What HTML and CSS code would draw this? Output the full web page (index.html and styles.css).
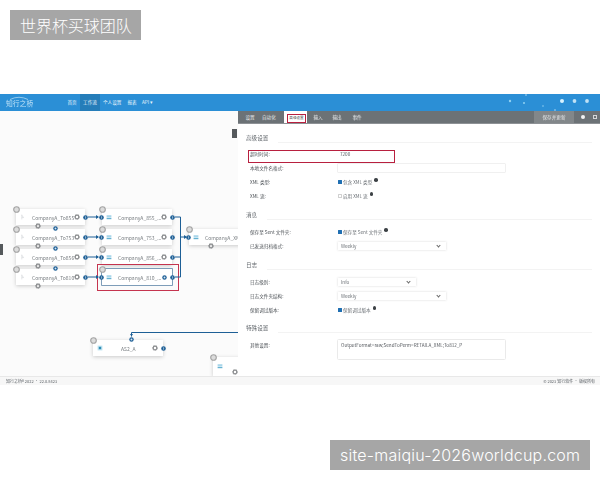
FILE: index.html
```html
<!DOCTYPE html>
<html lang="zh">
<head>
<meta charset="utf-8">
<title>世界杯买球团队</title>
<link rel="stylesheet" href="styles.css">
</head>
<body>
<svg class="defs" width="0" height="0" aria-hidden="true">
  <symbol id="gear" viewBox="0 0 10 10"><circle cx="5" cy="5" r="3" fill="none" stroke="#8c8e90" stroke-width="2"/><circle cx="5" cy="5" r="4.3" fill="none" stroke="#8c8e90" stroke-width="1.2" stroke-dasharray="1.4 1.3"/></symbol>
  <symbol id="port" viewBox="0 0 10 10"><circle cx="5" cy="5" r="4.6" fill="#1d5f96"/><path d="M3.8 2.8 6.2 5 3.8 7.2" fill="none" stroke="#fff" stroke-width="1.3"/></symbol>
  <symbol id="portgear" viewBox="0 0 10 10"><circle cx="5" cy="5" r="4.4" fill="#1d5f96"/><circle cx="5" cy="5" r="1.9" fill="#dbe8f2"/></symbol>
  <symbol id="slot" viewBox="0 0 10 10"><circle cx="5" cy="5" r="4" fill="#dcdcdc" stroke="#a3a3a3" stroke-width="1.6"/></symbol>
  <symbol id="doc" viewBox="0 0 10 10"><path d="M1 2h8v4H1z" fill="#a9d6ea"/><path d="M1 7h8v1.6H1z" fill="#3f9fc6"/></symbol>
  <symbol id="as2" viewBox="0 0 10 10"><path d="M1 1h8v8H1z" fill="#bfe3f1"/><path d="M3 3h4v4H3z" fill="#2f8db5"/></symbol>
  <symbol id="flag" viewBox="0 0 10 10"><path d="M3 1v8M3 2l3 4H3" fill="none" stroke="#d0d3d6" stroke-width="1"/></symbol>
</svg>

<div class="top-band"><div class="mark mark-cn">世界杯买球团队</div></div>

<main class="app">
  <header class="appbar">
    <div class="logo">
      <svg class="logo-arc" viewBox="0 0 20 4" width="20" height="4" aria-hidden="true"><path d="M1 3.500Q10-1 19 3.500" fill="none" stroke="#bfe2f7" stroke-width=".7"/></svg>
      知行之桥
    </div>
    <nav class="nav">
      <a class="nav-item nav-home">首页</a>
      <a class="nav-item nav-on">工作流</a>
      <a class="nav-item nav-me">个人设置</a>
      <a class="nav-item nav-rep">报表</a>
      <a class="nav-item nav-api">API ▾</a>
    </nav>
    <svg class="sparks" viewBox="0 0 100 17" width="100" height="17" aria-hidden="true">
      <circle cx="11" cy="7" r="1.200" fill="#8fd0f2"/><circle cx="25" cy="9" r="1" fill="#8fd0f2"/><circle cx="44" cy="12" r=".8" fill="#8fd0f2"/><circle cx="27" cy="1" r=".7" fill="#cfeaf8"/><circle cx="56" cy="16" r=".7" fill="#cfeaf8"/>
      <circle cx="63" cy="7" r="2" fill="#d8f2ff"/><circle cx="75.500" cy="7" r="1.900" fill="#bfe1f5"/><circle cx="88" cy="7" r="1.900" fill="#bfe1f5"/>
    </svg>
  </header>

  <div class="workspace">
    <section class="canvas">
      <svg class="wires" viewBox="0 0 238 265" width="238" height="265" aria-hidden="true">
        <g fill="none" stroke="#1d5f96" stroke-width="1">
          <path d="M88 106h10M88 126h10M88 146h10M88 166h10"/>
          <path d="M175 106h5.500v60H175M175 146h5.500M180.500 126h5"/>
          <path d="M131.500 221.500H238M131.500 221.500v4"/>
        </g>
        <g fill="#1d5f96">
          <path d="M96 104l3 2-3 2zM96 124l3 2-3 2zM96 144l3 2-3 2zM96 164l3 2-3 2zM184 124l3 2-3 2zM130 223h3l-1.500 2.500z"/>
        </g>
      </svg>

      <div class="node src n1"><svg class="ic"><use href="#flag"/></svg><span class="nm">CompanyA_To855</span><svg class="gr"><use href="#gear"/></svg><svg class="slot tl"><use href="#slot"/></svg><svg class="port out"><use href="#port"/></svg><svg class="gr bl"><use href="#gear"/></svg><svg class="port bb"><use href="#portgear"/></svg></div>
      <div class="node src n2"><svg class="ic"><use href="#flag"/></svg><span class="nm">CompanyA_To753</span><svg class="gr"><use href="#gear"/></svg><svg class="slot tl"><use href="#slot"/></svg><svg class="port out"><use href="#port"/></svg><svg class="gr bl"><use href="#gear"/></svg><svg class="port bb"><use href="#portgear"/></svg></div>
      <div class="node src n3"><svg class="ic"><use href="#flag"/></svg><span class="nm">CompanyA_To856</span><svg class="gr"><use href="#gear"/></svg><svg class="slot tl"><use href="#slot"/></svg><svg class="port out"><use href="#port"/></svg><svg class="gr bl"><use href="#gear"/></svg><svg class="port bb"><use href="#portgear"/></svg></div>
      <div class="node src n4"><svg class="ic"><use href="#flag"/></svg><span class="nm">CompanyA_To810</span><svg class="gr"><use href="#gear"/></svg><svg class="slot tl"><use href="#slot"/></svg><svg class="port out"><use href="#port"/></svg><svg class="gr bl"><use href="#gear"/></svg></div>

      <div class="node n5"><svg class="ic"><use href="#doc"/></svg><span class="nm">CompanyA_855_...</span><svg class="gr"><use href="#gear"/></svg><svg class="slot tl"><use href="#slot"/></svg><svg class="port in"><use href="#port"/></svg><svg class="port out"><use href="#port"/></svg></div>
      <div class="node n6"><svg class="ic"><use href="#doc"/></svg><span class="nm">CompanyA_753_...</span><svg class="gr"><use href="#gear"/></svg><svg class="slot tl"><use href="#slot"/></svg><svg class="port in"><use href="#port"/></svg><svg class="port out"><use href="#port"/></svg></div>
      <div class="node n7"><svg class="ic"><use href="#doc"/></svg><span class="nm">CompanyA_856_...</span><svg class="gr"><use href="#gear"/></svg><svg class="slot tl"><use href="#slot"/></svg><svg class="port in"><use href="#port"/></svg><svg class="port out"><use href="#port"/></svg></div>
      <div class="picked"></div>
      <div class="node n8 node-sel"><svg class="ic"><use href="#doc"/></svg><span class="nm">CompanyA_810_...</span><svg class="gr gr-blue"><use href="#portgear"/></svg><svg class="slot tl"><use href="#slot"/></svg><svg class="port in"><use href="#port"/></svg><svg class="port out"><use href="#port"/></svg></div>

      <div class="node n9"><svg class="ic"><use href="#doc"/></svg><span class="nm">CompanyA_XM</span><svg class="slot tl"><use href="#slot"/></svg><svg class="port in"><use href="#port"/></svg><svg class="gr bl"><use href="#gear"/></svg></div>
      <div class="node n10"><svg class="ic"><use href="#as2"/></svg><span class="nm nm-mid">AS2_A</span><svg class="gr"><use href="#gear"/></svg><svg class="slot tl"><use href="#slot"/></svg><svg class="port out"><use href="#port"/></svg><svg class="port top"><use href="#portgear"/></svg></div>
      <div class="node n11"><svg class="ic"><use href="#doc"/></svg><svg class="slot tl"><use href="#slot"/></svg><svg class="gr bl"><use href="#gear"/></svg></div>

      <div class="grip"></div>
      <div class="collapse"></div>
    </section>

    <section class="panel">
      <div class="tabs">
        <a class="tab tab-a">设置</a>
        <a class="tab tab-b">自动化</a>
        <a class="tab tab-on"><span class="tab-red">高级设置</span></a>
        <a class="tab tab-c">输入</a>
        <a class="tab tab-d">输出</a>
        <a class="tab tab-e">事件</a>
        <span class="tools">
          <a class="save">保存并更新</a>
          <a class="tool"><i class="dot"></i></a>
          <a class="tool"><i class="ext"></i></a>
        </span>
      </div>

      <form class="form">
        <h3 class="sec sec-first"><span>高级设置</span></h3>
        <div class="row row-red"><label>超时时间:</label><span class="val">7200</span></div>
        <div class="row"><label>本地文件名格式:</label><span class="field"></span></div>
        <div class="row"><label>XML 类型:</label><span class="chk"><i class="box on"></i>包含 XML 类型 <i class="help"></i></span></div>
        <div class="row"><label>XML 流:</label><span class="chk"><i class="box"></i>启用 XML 流 <i class="help"></i></span></div>

        <h3 class="sec"><span>消息</span></h3>
        <div class="row row-gap"><label>保存至 Sent 文件夹:</label><span class="chk"><i class="box on"></i>保存至 Sent 文件夹 <i class="help"></i></span></div>
        <div class="row"><label>已发送归档格式:</label><span class="sel sel-md">Weekly</span></div>

        <h3 class="sec"><span>日志</span></h3>
        <div class="row row-gap"><label>日志级别:</label><span class="sel sel-sm">Info</span></div>
        <div class="row"><label>日志文件夹结构:</label><span class="sel sel-md">Weekly</span></div>
        <div class="row"><label>保留调试版本:</label><span class="chk"><i class="box on"></i>保留调试版本 <i class="help"></i></span></div>

        <h3 class="sec sec-last"><span>特殊设置</span></h3>
        <div class="row row-area"><label>其他设置:</label><span class="area">OutputFormat=raw;SendToPerm=RETAILA_XML;To812_P</span></div>
      </form>
    </section>
  </div>

  <footer class="statusbar">
    <span>知行之桥® 2022 · 22.0.8423</span>
    <span>© 2023 知行软件 · 版权所有</span>
  </footer>
</main>

<div class="bottom-band"><div class="mark mark-en">site-maiqiu-2026worldcup.com</div></div>
</body>
</html>
```

FILE: styles.css
```css
* { box-sizing: border-box; }
html, body { margin: 0; padding: 0; background: #fff; }
body { width: 600px; height: 480px; overflow: hidden; font-family: "Noto Sans CJK SC", "Liberation Sans", sans-serif; }
.defs { position: absolute; }

.top-band { height: 94px; padding: 10px 0 0 10px; }
.bottom-band { padding: 55px 10px 0 330px; }
.mark { height: 30px; line-height: 30px; background: #a6a6a6; color: #fff; font-weight: 300; }
.mark-cn { width: 131px; padding-left: 10px; font-size: 16px; letter-spacing: -.05px; white-space: nowrap; }
.mark-en { width: 260px; padding-left: 10px; font-family: "Inter", sans-serif; font-size: 16px; letter-spacing: .22px; white-space: nowrap; }

.app { height: 291px; display: flex; flex-direction: column; filter: blur(.5px); font-size: 4.6px; color: #5c6166; }

.appbar { height: 17px; flex: none; display: flex; align-items: stretch; background: #2b8fd6; color: #e8f4fc; position: relative; }
.logo { width: 67.400px; padding: 1px 0 0 6px; line-height: 16px; font-size: 6.800px; color: #bfe2f7; position: relative; }
.logo-arc { position: absolute; left: 9px; top: 2px; }
.nav { display: flex; }
.nav-item { line-height: 17px; white-space: nowrap; }
.nav-home { margin-right: 3.400px; }
.nav-on { width: 20px; background: #257db9; text-align: center; }
.nav-me { margin-left: 3px; }
.nav-rep { margin-left: 6px; }
.nav-api { margin-left: 5.400px; }
.sparks { position: absolute; right: 1px; top: 0; }

.workspace { flex: 1; min-height: 0; display: flex; }

.canvas { width: 238px; flex: none; position: relative; background: #fbfbfb; overflow: hidden; }
.wires { position: absolute; left: 0; top: 0; z-index: 1; }
.node { position: absolute; width: 70px; height: 16px; display: flex; align-items: center; background: #fff; box-shadow: 0 1px 4px rgba(0,0,0,.2); font-size: 5px; color: #7a7f83; }
.src { width: 69px; }
.node svg { position: absolute; }
.nm { margin-left: 16px; white-space: nowrap; }
.nm-mid { margin-left: 28px; }
.ic { left: 4px; top: 5px; width: 6px; height: 6px; }
.gr { right: 5px; top: 5px; width: 6px; height: 6px; }
.gr-blue { width: 5px; height: 5px; top: 5.500px; right: 5.500px; }
.slot { width: 7px; height: 7px; }
.tl { left: -3.500px; top: -3.500px; z-index: 2; }
.port { width: 5px; height: 5px; z-index: 2; }
.out { right: -3px; top: 5.500px; }
.in { left: -3px; top: 5.500px; }
.top { left: 36px; top: -3.500px; }
.bl { left: 19px; right: auto; top: 13.500px; }
.bb { left: 36.500px; top: 17px; }

.n1 { left: 16px; top: 98px; }
.n2 { left: 16px; top: 118px; }
.n3 { left: 16px; top: 138px; }
.n4 { left: 16px; top: 158px; }
.n5 { left: 102px; top: 98px; }
.n6 { left: 102px; top: 118px; }
.n7 { left: 102px; top: 138px; }
.n8 { left: 102px; top: 158px; }
.n9 { left: 189px; top: 118px; }
.n10 { left: 93px; top: 229px; }
.n11 { left: 213px; top: 246px; height: 19px; }
.n11 .ic { top: 6px; }
.n11 .bl { left: 19px; top: 12px; }
.node-sel { box-shadow: 0 0 0 .8px #5f86a8; }
.picked { position: absolute; left: 97px; top: 153px; width: 81.500px; height: 27px; border: 1.500px solid #c5344f; z-index: 0; }

.grip { position: absolute; left: 0; top: 133px; width: 3px; height: 11px; background: #55595c; }
.collapse { position: absolute; right: 1px; top: 18px; width: 5px; height: 9px; background: #55595c; }

.panel { flex: 1; min-width: 0; background: #fff; display: flex; flex-direction: column; }
.tabs { height: 13px; flex: none; display: flex; align-items: stretch; background: #6c7276; color: #e6e8ea; padding-left: 7.400px; border-bottom: 1px solid #8d9195; }
.tab { line-height: 12px; white-space: nowrap; }
.tab-a { width: 16.600px; }
.tab-b { width: 22px; }
.tab-on { width: 23px; padding: 3px 1px 0 3px; background: #fff; color: #444; }
.tab-red { display: block; width: 19px; height: 8.500px; border: 1.500px solid #b8203f; font-size: 3.600px; line-height: 5.500px; text-align: center; overflow: hidden; white-space: nowrap; }
.tab-c { margin-left: 6.400px; width: 19px; }
.tab-d { width: 20px; }
.tools { margin-left: auto; display: flex; align-items: stretch; gap: 1px; }
.save { width: 40px; margin-right: 2px; text-align: center; line-height: 12px; background: #82878a; }
.tool { width: 11px; display: flex; align-items: center; justify-content: center; }
.dot { width: 4px; height: 4px; border-radius: 50%; background: #f2f2f2; }
.ext { width: 4px; height: 4px; border: 1px solid #d4d6d8; }

.form { flex: 1; min-height: 0; margin: 0; padding: 9px 8px 0; }
.sec { display: flex; align-items: flex-end; gap: 10px; margin: 7px 0 0; height: 10px; font-size: 5.600px; line-height: 10px; font-weight: 400; color: #666b70; }
.sec::after { content: ""; flex: 1; border-bottom: 1px solid #f3f3f3; }
.sec-first { margin-top: 0; margin-bottom: 3.500px; }
.sec-last { margin-top: 6px; margin-bottom: 6px; }
.row { height: 14px; display: flex; align-items: center; padding-left: 4px; }
.row label { width: 87px; flex: none; color: #4c5156; white-space: nowrap; }
.row-gap { margin-top: 5px; }
.row-red { position: relative; }
.row-red::after { content: ""; position: absolute; left: 2px; top: 3px; width: 144.500px; height: 11px; border: 1.500px solid #b8203f; }
.val { padding-left: 3px; }
.field { width: 169px; height: 10px; border: 1px solid #f0f0f0; border-radius: 1px; }
.chk { display: flex; align-items: center; gap: 1px; padding-left: 1px; color: #6c7176; white-space: nowrap; }
.box { width: 4px; height: 4px; border: .5px solid #d0d0d0; border-radius: .5px; }
.box.on { background: #1f6fb2; border-color: #1f6fb2; }
.help { width: 3.500px; height: 3.500px; margin: -3px 0 0 1px; border-radius: 50%; background: #3d4246; }
.sel { height: 10px; padding: 0 3px; display: flex; align-items: center; justify-content: space-between; border: 1px solid #f2f2f2; border-radius: 1.500px; color: #6c7176; box-shadow: 0 0 2px rgba(0,0,0,.06); }
.sel::after { content: ""; width: 2px; height: 2px; margin-right: 3px; border-right: .7px solid #666; border-bottom: .7px solid #666; transform: rotate(45deg); }
.sel-md { width: 110px; }
.sel-sm { width: 80px; }
.row-area { height: 22px; align-items: flex-start; }
.row-area label { padding-top: 3px; }
.area { width: 169px; height: 21px; padding: 2px 3px; border: 1px solid #eaeaea; border-radius: 1.500px; color: #55595e; white-space: nowrap; }

.statusbar { height: 9px; flex: none; display: flex; justify-content: space-between; padding: 0 5px 0 6px; line-height: 8px; background: #f7f7f7; border-top: 1px solid #e8e8e8; font-size: 4px; color: #60656a; }
```
